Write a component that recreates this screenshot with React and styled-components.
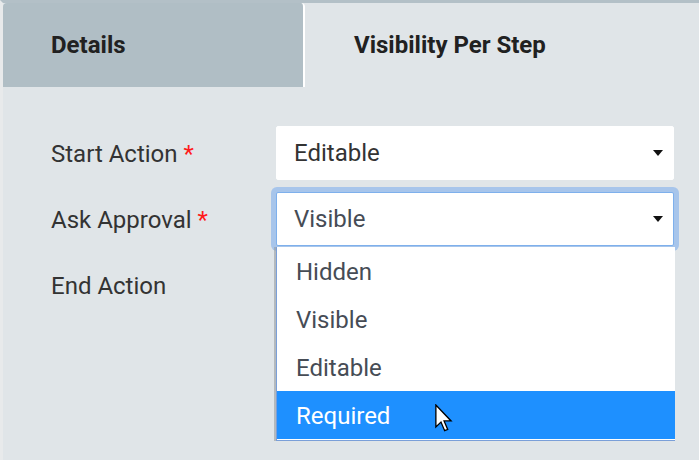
import React from 'react';
import styled, {createGlobalStyle} from 'styled-components';

const GlobalStyle = createGlobalStyle`
  html, body {
    margin: 0;
    padding: 0;
    background: #e0e5e8;
    font-family: Roboto, "Liberation Sans", sans-serif;
  }
`;

const Frame = styled.div`
  width: 699px;
  height: 460px;
  box-sizing: border-box;
  border-top: 3px solid #b3c0c7;
  border-left: 3px solid #e8eaeb;
  background: #e0e5e8;
  display: flex;
  flex-direction: column;
  overflow: hidden;
`;

const TabBar = styled.div`
  display: flex;
  height: 84px;
`;

const Tab = styled.div`
  box-sizing: border-box;
  width: ${props => props.width || 'auto'};
  flex: ${props => props.width ? 'none' : '1'};
  display: flex;
  align-items: center;
  padding-left: ${props => props.padLeft || '48px'};
  background: ${props => props.active ? '#b0bec5' : 'transparent'};
  border-right: ${props => props.active ? '2px solid #ffffff' : 'none'};
  border-radius: 4px 4px 0 0;
  font-size: 24px;
  font-weight: 700;
  color: #212121;
`;

const Form = styled.div`
  display: grid;
  grid-template-columns: 225px 398px;
  grid-auto-rows: 54px;
  row-gap: 12px;
  align-items: center;
  padding: 39px 0 0 48px;
`;

const Label = styled.div`
  font-size: 24px;
  color: #333333;
  padding-top: 2px;
`;

const Star = styled.span`
  color: #ff1a1a;
  margin-left: 6px;
`;

const SelectWrap = styled.div`
  position: relative;
  height: 100%;
`;

const SelectBox = styled.div`
  box-sizing: border-box;
  height: 100%;
  background: #ffffff;
  border: 1px solid ${props => props.focused ? '#7eb0ec' : '#ffffff'};
  border-radius: 2px;
  box-shadow: ${props => props.focused ? '0 0 0 5px rgba(120, 172, 236, 0.55)' : 'none'};
  display: flex;
  align-items: center;
  justify-content: space-between;
  padding: 0 10px 0 17px;
  font-size: 24px;
  color: ${props => props.focused ? '#464c55' : '#333333'};
`;

const Caret = styled.span`
  width: 0;
  height: 0;
  border-left: 5.5px solid transparent;
  border-right: 5.5px solid transparent;
  border-top: 6px solid #111111;
`;

const Menu = styled.div`
  position: absolute;
  top: calc(100% + 1px);
  left: 0;
  width: 399px;
  box-sizing: border-box;
  background: #ffffff;
  border-left: 1px solid #7a9fd8;
  border-bottom: 1px solid #7a9fd8;
  padding-bottom: 1px;
  box-shadow: -2px 0 0 rgba(150, 155, 160, 0.6);
  z-index: 2;
`;

const MenuItem = styled.div`
  height: 48px;
  display: flex;
  align-items: center;
  padding-left: 19px;
  padding-top: 1px;
  box-sizing: border-box;
  font-size: 24px;
  background: ${props => props.selected ? '#1e90ff' : '#ffffff'};
  color: ${props => props.selected ? '#ffffff' : '#464c55'};
`;

const Cursor = styled.svg`
  position: absolute;
  left: 158px;
  bottom: 8px;
  pointer-events: none;
`;

const options = ['Hidden', 'Visible', 'Editable', 'Required'];

export default function App() {
  return (
    <>
      <GlobalStyle/>
      <Frame>
        <TabBar>
          <Tab active width="302px">Details</Tab>
          <Tab padLeft="49px">Visibility Per Step</Tab>
        </TabBar>
        <Form>
          <Label>Start Action<Star>*</Star></Label>
          <SelectWrap>
            <SelectBox>Editable<Caret/></SelectBox>
          </SelectWrap>

          <Label>Ask Approval<Star>*</Star></Label>
          <SelectWrap>
            <SelectBox focused>Visible<Caret/></SelectBox>
            <Menu>
              {options.map(option => (
                <MenuItem key={option} selected={option === 'Required'}>{option}</MenuItem>
              ))}
              {/* mouse pointer hovering the highlighted option */}
              <Cursor width="19" height="28" viewBox="0 0 13 19">
                <path d="M0.6 0.6 L0.6 15.6 L4.1 12.3 L6.6 18.2 L8.7 17.3 L6.2 11.5 L11 11.5 Z"
                      fill="#ffffff" stroke="#000000" strokeWidth="0.9" strokeLinejoin="miter"/>
              </Cursor>
            </Menu>
          </SelectWrap>

          <Label>End Action</Label>
          <SelectWrap/>
        </Form>
      </Frame>
    </>
  );
}
